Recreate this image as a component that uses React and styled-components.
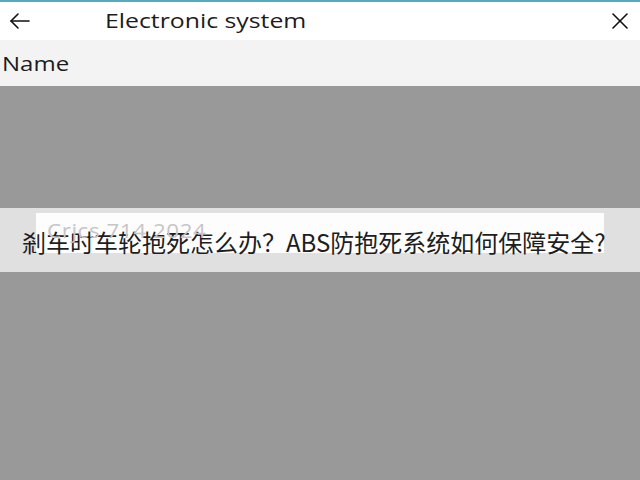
import React from 'react';
import styled, { createGlobalStyle } from 'styled-components';

const Global = createGlobalStyle`
  html, body {
    margin: 0;
    padding: 0;
    height: 100%;
  }
  body {
    font-family: 'Open Sans', 'Noto Sans', 'Noto Sans CJK SC', sans-serif;
    color: #1a1a1a;
  }
  #root {
    height: 100%;
  }
`;

const Page = styled.div`
  width: 640px;
  height: 480px;
  display: flex;
  flex-direction: column;
  overflow: hidden;
  background: #fff;
`;

const TopBar = styled.div`
  height: 40px;
  box-sizing: border-box;
  border-top: 2px solid #5aa9b8;
  display: grid;
  grid-template-columns: 40px 1fr 40px;
  align-items: center;
  background: #fff;
`;

const IconButton = styled.div`
  display: flex;
  align-items: center;
  justify-content: center;
  height: 38px;
`;

const Wide = styled.span`
  display: inline-block;
  transform: scaleX(${p => p.$scale || 1.24});
  transform-origin: left center;
`;

const Title = styled.div`
  font-size: 20px;
  padding-left: 65px;
  margin-top: -2px;
  color: #1c1c1c;
`;

const NameRow = styled.div`
  height: 46px;
  background: #f3f3f3;
  display: flex;
  align-items: center;
  padding-left: 2px;
  font-size: 20px;
  color: #1c1c1c;
`;

const Backdrop = styled.div`
  flex: 1;
  background: #999999;
  display: flex;
  flex-direction: column;
  padding-top: 122px;
`;

const Band = styled.div`
  height: 64px;
  background: #e0e0e0;
  display: grid;
`;

const InputBox = styled.div`
  grid-area: 1 / 1;
  margin: 5px 36px 0 36px;
  height: 40px;
  background: #fdfdfd;
  box-sizing: border-box;
  padding: 4px 0 0 11px;
  font-size: 20px;
  letter-spacing: 0.5px;
  color: #c6c6c6;
`;

const Caption = styled.div`
  grid-area: 1 / 1;
  align-self: start;
  margin-top: 17px;
  padding-left: 22px;
  font-family: 'Noto Sans CJK SC', 'Noto Sans', sans-serif;
  font-size: 24px;
  line-height: 34px;
  color: #1e1e1e;
  white-space: nowrap;
`;

export default function App() {
  return (
    <Page>
      <Global />
      <TopBar>
        <IconButton>
          <svg width="24" height="24" viewBox="0 0 24 24" fill="none" stroke="#111" strokeWidth="1.6" strokeLinecap="round" strokeLinejoin="round">
            <path d="M21 12H3" />
            <path d="M10 5l-7 7 7 7" />
          </svg>
        </IconButton>
        <Title>
          <Wide>Electronic system</Wide>
        </Title>
        <IconButton>
          <svg width="20" height="20" viewBox="0 0 20 20" fill="none" stroke="#111" strokeWidth="1.6" strokeLinecap="round">
            <path d="M3 3l14 14" />
            <path d="M17 3L3 17" />
          </svg>
        </IconButton>
      </TopBar>
      <NameRow>
        <Wide $scale={1.2}>Name</Wide>
      </NameRow>
      <Backdrop>
        <Band>
          <InputBox>
            <Wide $scale={1.12}>Crjcs 714 2024</Wide>
          </InputBox>
          <Caption>剎车时车轮抱死怎么办？ABS防抱死系统如何保障安全?</Caption>
        </Band>
      </Backdrop>
    </Page>
  );
}
